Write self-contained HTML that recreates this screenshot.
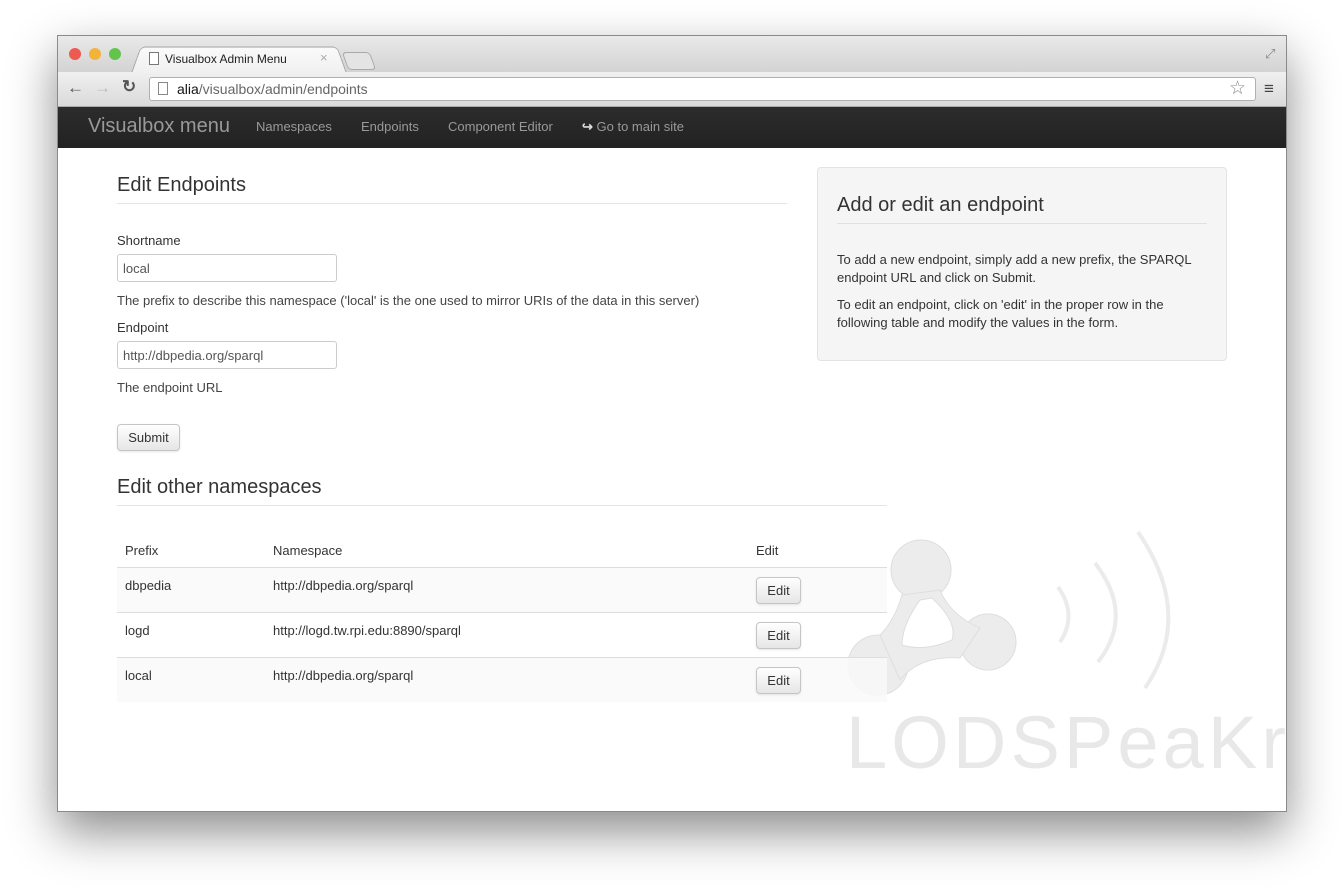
<!DOCTYPE html>
<html><head><style>
*{box-sizing:border-box;margin:0;padding:0}
body{width:1344px;height:892px;background:#fff;font-family:"Liberation Sans",sans-serif;position:relative;overflow:hidden;color:#333}
.a{position:absolute}
.win{left:57px;top:35px;width:1230px;height:777px;background:#fff;box-shadow:0 20px 45px rgba(0,0,0,.45);border:1px solid #8a8a8a;overflow:hidden}
.title{left:0;top:0;width:1230px;height:36px;background:linear-gradient(#e9e9e9,#d3d3d3)}
.tool{left:0;top:36px;width:1230px;height:35px;background:linear-gradient(#f0f0f0,#dadada);border-bottom:1px solid #aaa}
.nav{left:0;top:71px;width:1230px;height:41px;background:linear-gradient(#2c2c2c,#222)}
.dot{width:12px;height:12px;border-radius:50%;top:12px}
.f{font-size:13px}
input.in{position:absolute;width:220px;height:28px;border:1px solid #ccc;border-radius:3px;font:13px "Liberation Sans",sans-serif;padding:0 5px;color:#555;background:#fff}
.btn{position:absolute;border:1px solid #c5c5c5;border-radius:4px;background:linear-gradient(#fff,#e6e6e6);font-size:13px;color:#333;text-align:center;box-shadow:0 1px 2px rgba(0,0,0,.1)}
.hr{height:1px;background:#e5e5e5}
</style></head><body>
<div class="a win">
 <div class="a title">
  <div class="a dot" style="left:11px;background:#ec5a52"></div>
  <div class="a dot" style="left:31px;background:#f2b33b"></div>
  <div class="a dot" style="left:51px;background:#62c44d"></div>
  <div class="a" style="left:78px;top:10px;width:206px;height:27px;background:linear-gradient(#fafafa,#f0f0f0);border:1px solid #a8a8a8;border-bottom:none;border-radius:5px 5px 0 0;transform:perspective(40px) rotateX(8deg)"></div>
  <div class="a" style="left:91px;top:16px;width:10px;height:13px;border:1px solid #777;background:#fff"></div>
  <div class="a" style="left:107px;top:16px;font-size:12px;color:#222">Visualbox Admin Menu</div>
  <div class="a" style="left:262px;top:14px;font-size:13px;color:#aaa">×</div>
  <div class="a" style="left:287px;top:16px;width:28px;height:18px;border:1px solid #aaa;border-radius:4px;background:#e4e4e4;transform:skewX(20deg)"></div>
  <div class="a" style="left:1207px;top:10px;font-size:13px;color:#888">⤢</div>
 </div>
 <div class="a tool">
  <div class="a" style="left:9px;top:6px;font-size:17px;color:#555">←</div>
  <div class="a" style="left:36px;top:6px;font-size:17px;color:#bbb">→</div>
  <div class="a" style="left:64px;top:5px;font-size:17px;color:#555;font-weight:bold">↻</div>
  <div class="a" style="left:91px;top:5px;width:1107px;height:24px;background:#fff;border:1px solid #b0b0b0;border-radius:3px"></div>
  <div class="a" style="left:100px;top:10px;width:10px;height:13px;border:1px solid #888"></div>
  <div class="a" style="left:119px;top:9px;font-size:14px;color:#666"><span style="color:#111">alia</span>/visualbox/admin/endpoints</div>
  <div class="a" style="left:1171px;top:5px;font-size:19px;color:#888">☆</div>
  <div class="a" style="left:1206px;top:7px;font-size:17px;color:#444">≡</div>
 </div>
 <div class="a nav">
  <div class="a" style="left:30px;top:8px;font-size:20px;color:#999">Visualbox menu</div>
  <div class="a f" style="left:198px;top:12px;color:#999">Namespaces</div>
  <div class="a f" style="left:303px;top:12px;color:#999">Endpoints</div>
  <div class="a f" style="left:390px;top:12px;color:#999">Component Editor</div>
  <div class="a f" style="left:524px;top:12px;color:#999"><b style="color:#ddd">↪</b> Go to main site</div>
 </div>
</div>
<!-- logo watermark -->
<svg class="a" style="left:840px;top:520px" width="447" height="290">
 <g fill="#ececec" stroke="#dedede">
  <circle cx="81" cy="50" r="30"/><circle cx="148" cy="122" r="28"/><circle cx="38" cy="145" r="30"/>
  <path d="M62 75 Q55 100 40 115 L60 160 Q80 135 120 138 L140 108 Q110 95 100 70Z"/>
 </g>
 <path d="M80 80 Q62 105 62 125 Q85 132 112 120 Q118 102 92 78Z" fill="#fff" stroke="#ddd"/>
 <g fill="none" stroke="#ebebeb" stroke-width="4">
  <path d="M218 67 Q238 95 220 122"/><path d="M255 43 Q295 95 258 142"/><path d="M298 12 Q355 95 305 168"/>
 </g>
 <text x="6" y="248" font-family="Liberation Sans,sans-serif" font-size="74" fill="#e8e8e8" textLength="440">LODSPeaKr</text>
</svg>
<div class="a" style="left:117px;top:174px;font-size:20px;color:#333">Edit Endpoints</div>
<div class="a hr" style="left:117px;top:203px;width:670px"></div>
<div class="a f" style="left:117px;top:233px">Shortname</div>
<input class="in" style="left:117px;top:254px;width:220px;height:28px" value="local">
<div class="a f" style="left:117px;top:293px;color:#444">The prefix to describe this namespace ('local' is the one used to mirror URIs of the data in this server)</div>
<div class="a f" style="left:117px;top:320px">Endpoint</div>
<input class="in" style="left:117px;top:341px;width:220px;height:28px" value="http://dbpedia.org/sparql">
<div class="a f" style="left:117px;top:380px;color:#444">The endpoint URL</div>
<div class="btn" style="left:117px;top:424px;width:63px;height:27px;line-height:25px">Submit</div>
<div class="a" style="left:117px;top:476px;font-size:20px">Edit other namespaces</div>
<div class="a hr" style="left:117px;top:505px;width:770px"></div>
<div class="a f" style="left:125px;top:543px">Prefix</div>
<div class="a f" style="left:273px;top:543px">Namespace</div>
<div class="a f" style="left:756px;top:543px">Edit</div>
<div class="a" style="left:117px;top:567px;width:770px;height:45px;background:rgba(249,249,249,.85);border-top:1px solid #ddd"></div>
<div class="a" style="left:117px;top:612px;width:770px;height:45px;border-top:1px solid #ddd"></div>
<div class="a" style="left:117px;top:657px;width:770px;height:45px;background:rgba(249,249,249,.85);border-top:1px solid #ddd"></div>
<div class="a f" style="left:125px;top:578px">dbpedia</div><div class="a f" style="left:273px;top:578px">http://dbpedia.org/sparql</div>
<div class="btn" style="left:756px;top:577px;width:45px;height:27px;line-height:25px">Edit</div>
<div class="a f" style="left:125px;top:623px">logd</div><div class="a f" style="left:273px;top:623px">http://logd.tw.rpi.edu:8890/sparql</div>
<div class="btn" style="left:756px;top:622px;width:45px;height:27px;line-height:25px">Edit</div>
<div class="a f" style="left:125px;top:668px">local</div><div class="a f" style="left:273px;top:668px">http://dbpedia.org/sparql</div>
<div class="btn" style="left:756px;top:667px;width:45px;height:27px;line-height:25px">Edit</div>
<div class="a" style="left:817px;top:167px;width:410px;height:194px;background:#f5f5f5;border:1px solid #e3e3e3;border-radius:4px"></div>
<div class="a" style="left:837px;top:194px;font-size:20px">Add or edit an endpoint</div>
<div class="a hr" style="left:837px;top:223px;width:370px;background:#e0e0e0"></div>
<div class="a f" style="left:837px;top:251px;width:380px;line-height:18px">To add a new endpoint, simply add a new prefix, the SPARQL endpoint URL and click on Submit.</div>
<div class="a f" style="left:837px;top:296px;width:380px;line-height:18px">To edit an endpoint, click on 'edit' in the proper row in the following table and modify the values in the form.</div>
</body></html>
